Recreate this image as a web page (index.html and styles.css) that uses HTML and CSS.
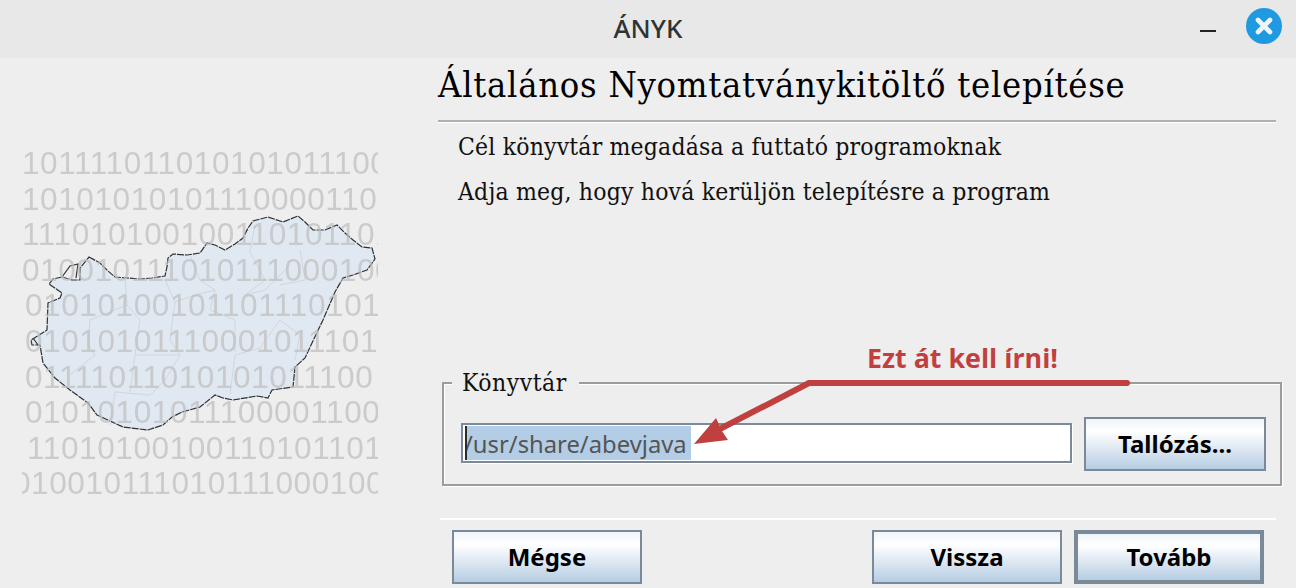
FILE: index.html
```html
<!DOCTYPE html>
<html lang="hu">
<head>
<meta charset="utf-8">
<title>ÁNYK</title>
<link rel="stylesheet" href="styles.css">
</head>
<body>
<div class="window">
  <header class="titlebar">
    <span class="title">ÁNYK</span>
    <span class="minimize"></span>
    <svg class="close" viewBox="0 0 36 36" width="36" height="36"><circle cx="18" cy="18" r="18" fill="#1f9ae0"/><path d="M12 12L24 24M24 12L12 24" stroke="#eef6fb" stroke-width="4.6" stroke-linecap="round"/></svg>
  </header>
  <div class="content">
    <aside class="art">
      <svg class="map" viewBox="0 0 400 380" width="400" height="380">
        <path class="land" d="M89 127L100 133L108 141L115 147L127 148L140 149L152 148L165 146L167 137L168 128L173 124L187 125L200 123L207 113L215 115L225 120L235 114L243 108L248 98L253 91L268 87L283 92L298 86L305 92L313 100L325 100L337 95L345 103L353 110L362 117L372 118L375 129L367 140L353 145L343 148L335 162L323 190L312 213L305 228L295 237L293 257L272 260L268 268L257 266L233 270L223 268L215 265L200 277L182 282L172 287L163 295L148 300L123 297L97 285L88 273L70 260L55 248L43 233L40 215L32 215L31 210L47 200L48 173L60 168L62 163L49 154L53 149L62 147L72 150L80 150L80 138Z"/>
        <path class="county" d="M125 149L127 175L90 190L88 215L95 225L70 245M127 175L140 190L135 225L130 262M165 150L175 172L195 165L215 160L210 180L235 190L235 222M255 95L250 122L265 150L245 165L265 160L290 135M235 225L260 218L280 190L300 205L295 230M235 225L230 265M175 172L170 210L180 225L135 225M180 225L165 250L150 265L115 262L110 295M215 160L200 150L190 125M300 120L305 150L280 155"/>
        <path class="coast" d="M62 147L70 136L78 134L76 148M33 208L38 215"/>
      </svg>
      <div class="digits">
        <div class="row">101111011010101011100</div>
        <div class="row">101010101011100001100</div>
        <div class="row">111010100100110101101</div>
        <div class="row">010010111010111000100</div>
        <div class="row inset">01010100101101110101</div>
        <div class="row inset">010101011100010111010</div>
        <div class="row inset">01111011010101011100</div>
        <div class="row inset">01010101011100001100</div>
        <div class="row inset-more">11010100100110101101</div>
        <div class="row outset">0100101110101110001000</div>
      </div>
    </aside>
    <main class="panel">
      <h1 class="heading">Általános Nyomtatványkitöltő telepítése</h1>
      <div class="rule"></div>
      <p class="line">Cél könyvtár megadása a futtató programoknak</p>
      <p class="line">Adja meg, hogy hová kerüljön telepítésre a program</p>
      <div class="spacer"></div>
      <fieldset class="group">
        <legend class="legend">Könyvtár</legend>
        <div class="field-row">
          <div class="field"><span class="selected">/usr/share/abevjava</span></div>
          <button class="btn browse">Tallózás...</button>
        </div>
      </fieldset>
      <div class="rule footer-rule"></div>
      <div class="actions">
        <button class="btn">Mégse</button>
        <span class="grow"></span>
        <button class="btn">Vissza</button>
        <button class="btn primary">Tovább</button>
      </div>
    </main>
  </div>
  <div class="note">Ezt át kell írni!</div>
  <svg class="arrow" viewBox="0 0 1296 588" width="1296" height="588">
    <path d="M1127 383L809 383L716 431" fill="none" stroke="#c04040" stroke-width="6" stroke-linecap="round" stroke-linejoin="round"/>
    <path d="M694 444L716 418L722 431L728 440Z" fill="#c04040"/>
  </svg>
</div>
</body>
</html>
```
FILE: styles.css
```css
* { box-sizing: border-box; }
html, body { margin: 0; padding: 0; }
body { width: 1296px; height: 588px; overflow: hidden; background: #eeeeee; }
.window { position: relative; width: 1296px; height: 588px; display: flex; flex-direction: column; }

.titlebar { height: 58px; flex: none; background: #e8e8e8; position: relative; display: flex; align-items: center; justify-content: center; }
.title { font: 500 26px "Noto Sans", sans-serif; color: #2e3436; margin-top: -3px; }
.minimize { position: absolute; left: 1200px; top: 30px; width: 16px; height: 2px; background: #222; }
.close { position: absolute; left: 1246px; top: 8px; }

.content { flex: 1; display: flex; min-height: 0; }

.art { width: 436px; flex: none; position: relative; }
.map { position: absolute; left: 0; top: 72px; }
.land { fill: #e0e8f1; stroke: #2b3238; stroke-width: 1.2; stroke-dasharray: 7 1; }
.county { fill: none; stroke: #d0d6dd; stroke-width: 1; }
.coast { fill: none; stroke: #2b3238; stroke-width: 1.2; }
.digits { position: absolute; left: 22px; top: 88px; width: 356px; filter: blur(.35px); }
.row { height: 35.6px; font: 31.6px/35.6px "Liberation Sans", sans-serif; letter-spacing: .55px; color: rgba(190,190,190,.72); white-space: nowrap; overflow: hidden; }
.inset { padding-left: 3px; }
.inset-more { padding-left: 5px; }
.outset { text-indent: -9px; }

.panel { flex: 1; min-width: 0; padding: 0 20px 0 2px; display: flex; flex-direction: column; }
.heading { margin: 0; height: 62px; font: 400 36px/54px "DejaVu Serif", serif; font-stretch: condensed; letter-spacing: .75px; color: #000; white-space: nowrap; }
.rule { height: 3px; background: #b0b0b0; border-bottom: 1px solid #fff; }
.line { margin: 0 0 0 20px; height: 45px; font: 400 24.5px/45px "DejaVu Serif", serif; font-stretch: condensed; letter-spacing: .18px; color: #111; white-space: nowrap; }
.rule + .line { margin-top: 1px; }
.spacer { flex: 1; }

.group { margin: 0 -6px 0 4px; padding: 22px 14px 14px 17px; height: 118px; border: 2px solid #9c9c9c; box-shadow: 1px 1px 0 #fff, inset 1px 1px 0 #fff; min-width: 0; }
.legend { margin-left: -9px; padding: 0 12px 0 10px; background: #eeeeee; font: 400 24.5px/30px "DejaVu Serif", serif; font-stretch: condensed; letter-spacing: .5px; color: #111; }
.field-row { display: flex; align-items: center; gap: 12px; margin-top: -5px; }
.field { flex: none; width: 611px; height: 40px; background: #fff; border: 2px solid #7a8a99; box-shadow: 1px 1px 0 #fff; display: flex; align-items: stretch; padding: 1px 0 0 2px; font: 400 23.8px/36px "Noto Sans", sans-serif; color: #555; }
.selected { background: #b3cde6; width: 226px; height: 34px; border-left: 2px solid #2b2b2b; text-indent: -3px; white-space: nowrap; overflow: hidden; }

.btn { width: 190px; height: 54px; flex: none; padding: 0 0 2px; border: 2px solid #7a8a99; border-radius: 0; background: linear-gradient(#eef5fb 0%, #ffffff 25%, #b6cde3 100%); font: 700 24px "Noto Sans", sans-serif; color: #000; }
.browse { width: 182px; margin-top: 2px; }
.primary { border-width: 4px; margin-left: 12px; }

.footer-rule { margin-top: 32px; margin-left: 2px; background: #fff; height: 2px; border: 0; }
.actions { display: flex; align-items: center; margin: 10px 12px 4px 14px; }
.grow { flex: 1; }

.note { position: absolute; left: 867px; top: 340px; font: 700 26.8px/36px "Open Sans", sans-serif; color: #c23f3f; white-space: nowrap; }
.arrow { position: absolute; left: 0; top: 0; pointer-events: none; }
```
